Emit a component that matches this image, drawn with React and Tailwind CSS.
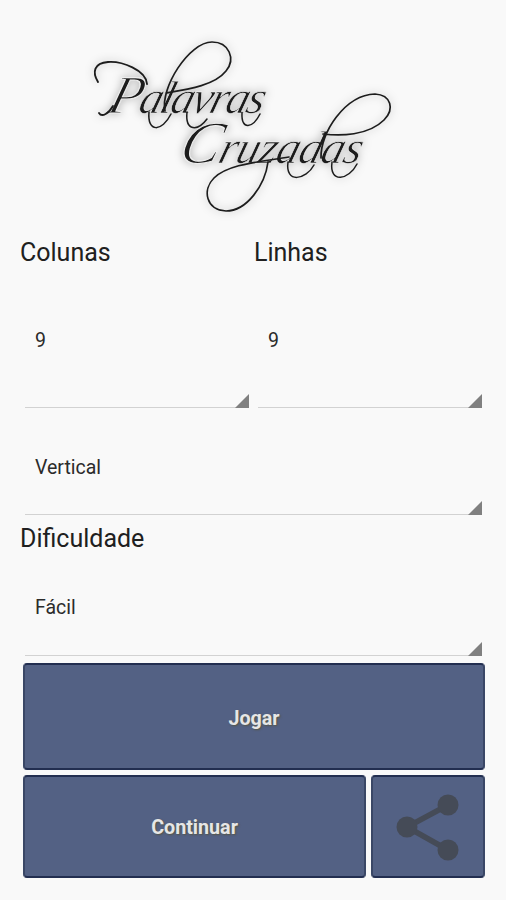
import { useState } from "react";

const Logo = () => (
    <svg viewBox="0 0 320 190" className="w-[320px] h-[190px] [filter:drop-shadow(0_0_4px_rgba(0,0,0,0.3))]">
        <g transform="translate(-85 -30)">
            <g
                fill="#1c1c1c"
                stroke="#ededed"
                strokeWidth="0.6"
                fontFamily="'Liberation Serif', serif"
                fontStyle="italic"
                fontSize="46"
            >
                <text transform="translate(106 113) skewX(-16)" textLength="156">
                    <tspan fontSize="54" strokeWidth="1.2">P</tspan>alavras
                </text>
                <text transform="translate(177 163) skewX(-16)" textLength="182">
                    <tspan fontSize="60" strokeWidth="1.2">C</tspan>ruzadas
                </text>
            </g>
            {/* swashes */}
            <g fill="none" stroke="#1c1c1c" strokeWidth="1.5" strokeLinecap="round">
                <path d="M98 82C92 72 94 63 108 62C122 61 146 70 147 84" strokeWidth="1.9" />
                <path d="M99 113C102 118 109 113 113 106" strokeWidth="1.9" />
                <path d="M165 111C160 88 189 42 212 42C229 42 236 59 226 71C215 85 190 89 166 93" strokeWidth="1.7" />
                <path d="M149 112C147 133 162 132 171 114" />
                <path d="M187 112C185 132 198 131 207 119" />
                <path d="M242 113C241 131 253 128 260 114" />
                <path d="M321 158C320 133 345 95 375 94C391 95 395 109 384 120C368 136 340 136 323 134" strokeWidth="1.7" />
                <path d="M268 162C265 185 247 211 226 211C206 210 202 190 214 178C228 164 259 162 289 157" strokeWidth="1.7" />
                <path d="M288 162C285 184 306 180 314 165" />
                <path d="M332 162C329 184 349 180 357 164" />
            </g>
        </g>
    </svg>
);

const Spinner = ({ value, className }) => (
    <div className={`relative flex-1 border-b border-[#d2d2d2] pl-[10px] text-[19.5px] leading-6 text-[#2b2b2b] ${className}`}>
        {value}
        <svg viewBox="0 0 14 14" className="absolute right-0 -bottom-px size-3.5">
            <path d="M14 0V14H0Z" fill="#808080" />
        </svg>
    </div>
);

const Button = ({ children, className, ...props }) => (
    <button
        className={`flex items-center justify-center rounded-[4px] border-2 border-x-[#3a4766] border-y-[#222e50] bg-[#536184] text-[19.7px] font-bold text-[#e6e6e6] [text-shadow:1px_1px_2px_#555544] ${className}`}
        {...props}
    >
        {children}
    </button>
);

const App = () => {
    const [columns] = useState(9);
    const [rows] = useState(9);
    const [direction] = useState("Vertical");
    const [difficulty] = useState("Fácil");

    return (
        <div className="h-[900px] w-full overflow-hidden bg-[#f9f9f9] pt-[30px] font-['Roboto',sans-serif] text-[#202020]">
            <div className="pl-[85px]">
                <Logo />
            </div>
            <div className="mt-[17px] flex pl-5 text-[25px] leading-8">
                <div className="w-[234px]">Colunas</div>
                <div>Linhas</div>
            </div>
            <div className="ml-[25px] mr-6 flex gap-[9px]">
                <Spinner value={columns} className="mt-[60px] h-[79px]" />
                <Spinner value={rows} className="mt-[60px] h-[79px]" />
            </div>
            <div className="ml-[25px] mr-6 flex">
                <Spinner value={direction} className="mt-12 h-[59px]" />
            </div>
            <div className="mt-2 pl-5 text-[25px] leading-8">Dificuldade</div>
            <div className="ml-[25px] mr-6 flex">
                <Spinner value={difficulty} className="mt-[41px] h-[60px]" />
            </div>
            <div className="ml-[23px] mr-[21px] mt-[7px] flex flex-col gap-[5px]">
                <Button className="h-[107px] pt-1">Jogar</Button>
                <div className="flex gap-[5px]">
                    <Button className="h-[103px] flex-1 pt-0.5">Continuar</Button>
                    <Button className="h-[103px] w-[114px]" aria-label="Share">
                        <svg viewBox="0 0 64 68" className="h-[68px] w-16">
                            <path d="M52 12L11 34L52 57" fill="none" stroke="#454b57" strokeWidth="5.5" />
                            <g fill="#454b57">
                                <circle cx="52" cy="12" r="10.5" />
                                <circle cx="11" cy="34" r="10.5" />
                                <circle cx="52" cy="57" r="10.5" />
                            </g>
                        </svg>
                    </Button>
                </div>
            </div>
        </div>
    );
};

export default App;
